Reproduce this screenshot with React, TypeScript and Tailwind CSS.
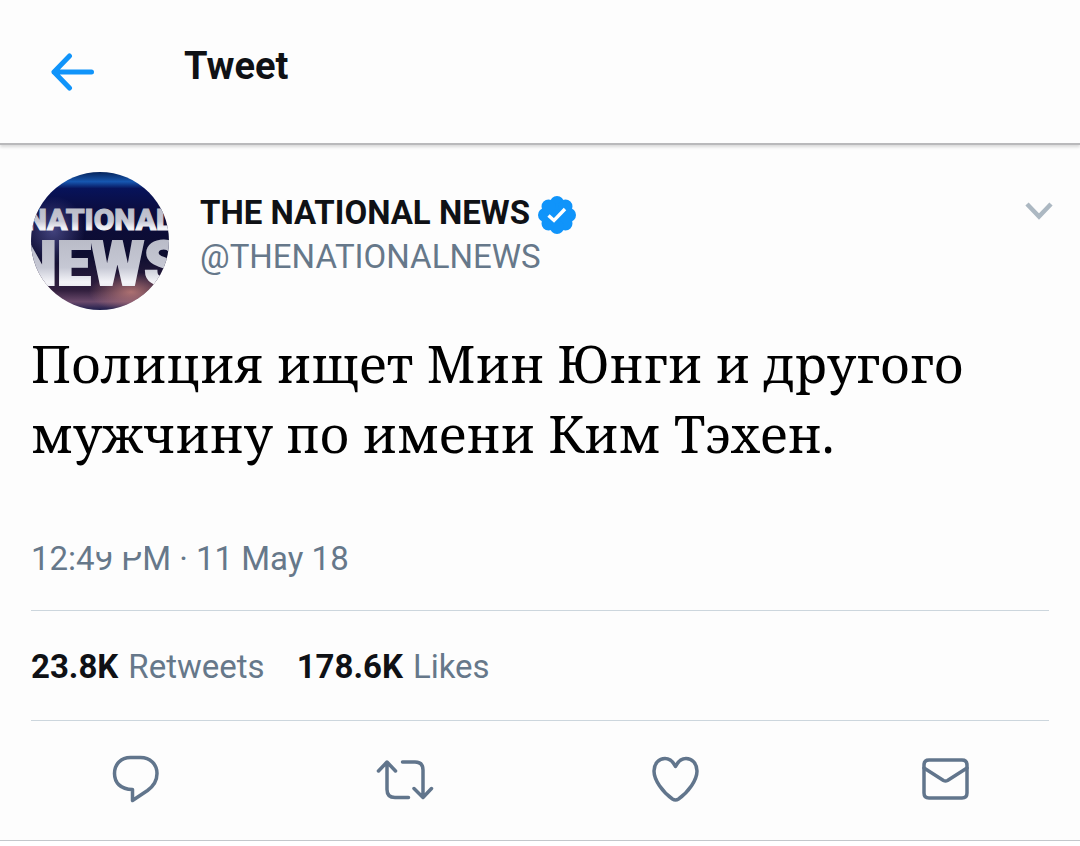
import { useState } from "react";

function Avatar() {
  return (
    <svg viewBox="0 0 138 138" className="size-[138px] shrink-0 rounded-full" role="img" aria-label="National News">
      <defs>
        <linearGradient id="sky" x1="0" y1="0" x2="0" y2="1">
          <stop offset="0" stopColor="#06245c" />
          <stop offset="0.07" stopColor="#1657b0" />
          <stop offset="0.12" stopColor="#07135a" />
          <stop offset="0.3" stopColor="#0c0c3c" />
          <stop offset="0.6" stopColor="#0d0d30" />
          <stop offset="0.86" stopColor="#33203f" />
          <stop offset="0.94" stopColor="#6b4a6c" />
          <stop offset="1" stopColor="#1d1d4c" />
        </linearGradient>
        <radialGradient id="glow">
          <stop offset="0" stopColor="#c9837c" stopOpacity="0.8" />
          <stop offset="1" stopColor="#c9837c" stopOpacity="0" />
        </radialGradient>
        <radialGradient id="haze">
          <stop offset="0" stopColor="#5a5a9c" stopOpacity="0.7" />
          <stop offset="1" stopColor="#5a5a9c" stopOpacity="0" />
        </radialGradient>
        <linearGradient id="steel" x1="0" y1="0" x2="0" y2="1">
          <stop offset="0" stopColor="#b4b6c2" />
          <stop offset="0.55" stopColor="#c6c8d4" />
          <stop offset="0.75" stopColor="#f4f4f8" />
          <stop offset="1" stopColor="#dcdce4" />
        </linearGradient>
      </defs>
      <rect width="138" height="138" fill="url(#sky)" />
      <ellipse cx="22" cy="58" rx="32" ry="34" fill="url(#haze)" />
      <ellipse cx="100" cy="120" rx="42" ry="20" fill="url(#glow)" />
      <g textAnchor="middle" fontWeight="900" fill="url(#steel)" stroke="url(#steel)">
        <text x="68" y="58" fontSize="30" strokeWidth="1">NATIONAL</text>
        <text x="67" y="113" fontSize="61" strokeWidth="2">NEWS</text>
      </g>
    </svg>
  );
}

function VerifiedBadge() {
  const petals = [0, 45, 90, 135, 180, 225, 270, 315];
  return (
    <svg viewBox="0 0 38 38" className="mt-1 size-[38px]" role="img" aria-label="Verified account">
      <g fill="#1094fa">
        <circle cx="19" cy="19" r="16" />
        {petals.map((angle) => (
          <circle key={angle} cx="19" cy="7" r="7" transform={`rotate(${angle} 19 19)`} />
        ))}
      </g>
      <path d="M10.500 19.500L16 24.500L27 13" fill="none" stroke="#fff" strokeWidth="3.400" />
    </svg>
  );
}

const actions = [
  {
    label: "Reply",
    paths: ["M40.500 45.500V34.500C28.500 34.500 22.500 27.500 22.500 18.500C22.500 9 29 2.500 38.500 2.500H48.500C58 2.500 65 9 65 18.500C65 26 61 31.500 55.500 35.500Z"],
  },
  {
    label: "Retweet",
    paths: [
      "M16.500 16L25 7L33.500 16M25 8V34.500Q25 42.500 33 42.500H46.500",
      "M40.500 7H53Q61 7 61 15V42M52 33.500L61 42.500L69.500 33.500",
    ],
  },
  {
    label: "Like",
    paths: ["M43.500 11.500C40.500 5.500 36.500 3.500 33 3.500C27 3.500 22 8.500 22 16C22 25 30.500 37 40.500 44Q43.500 46 46.500 44C56.500 37 65 25 65 16C65 8.500 60 3.500 54 3.500C50.500 3.500 46.500 5.500 43.500 11.500Z"],
  },
  {
    label: "Send via message",
    paths: [
      "M27 5H60Q65 5 65 10V38Q65 43 60 43H27Q22 43 22 38V10Q22 5 27 5Z",
      "M22 13L41.500 25.500Q43.500 26.500 45.500 25.500L65 13",
    ],
  },
];

export default function App() {
  const [active, setActive] = useState<string | null>(null);

  return (
    <div className="bg-[#fdfdfd] font-[Roboto,sans-serif] text-[33px] leading-[44px] text-[#0f1115]">
      <header className="flex h-[145px] items-center gap-[88px] border-b-2 border-[#b9b9bb] pl-[50px] shadow-[0_2px_3px_rgba(0,0,0,0.15)]">
        <button aria-label="Back">
          <svg viewBox="0 0 46 38" className="h-[38px] w-[46px]" fill="none" stroke="#1094fa" strokeWidth="5" strokeLinecap="round" strokeLinejoin="round">
            <path d="M19.500 3L4 19L19.500 35M4 19H41.500" />
          </svg>
        </button>
        <h1 className="pb-3 text-[38px] font-bold">Tweet</h1>
      </header>

      <main>
        <article className="px-[31px] pt-[27px]">
          <div className="flex">
            <Avatar />
            <div className="ml-[31px] flex-1 pt-[18px]">
              <div className="flex h-[46px] items-center gap-2">
                <h2 className="font-bold">THE NATIONAL NEWS</h2>
                <VerifiedBadge />
              </div>
              <a href="#profile" className="-mt-px block text-[#66788a]">@THENATIONALNEWS</a>
            </div>
            <button aria-label="More options" className="-mr-1 self-start pt-[30px]">
              <svg viewBox="0 0 28 18" className="h-[18px] w-7" fill="none" stroke="#acb8c2" strokeWidth="4.500">
                <path d="M2 2L14 14.500L26 2" />
              </svg>
            </button>
          </div>

          <p lang="ru" className="mt-[18px] font-['Noto_Serif','DejaVu_Serif',serif] text-[51px] leading-[70px] text-black">
            Полиция ищет Мин Юнги и другого мужчину по имени Ким Тэхен.
          </p>

          <time dateTime="2018-05-11T12:49" className="relative mt-[69px] block text-[#66788a]">
            12:49 PM · 11 May 18
            <span className="absolute top-0 left-[66px] h-[15px] w-12 bg-[#fdfdfd]" />
          </time>

          <div className="mt-[29px] flex gap-8 border-y border-[#ccd6dd] pt-[34px] pb-[31px] text-[#66788a]">
            <div className="flex gap-[10px]"><b className="text-[#0f1115]">23.8K</b> Retweets</div>
            <div className="flex gap-[10px]"><b className="text-[#0f1115]">178.6K</b> Likes</div>
          </div>
        </article>

        <div className="grid h-[120px] grid-cols-4 border-b border-[#c3c7cb]">
          {actions.map(({ label, paths }) => (
            <button
              key={label}
              aria-label={label}
              aria-pressed={active === label}
              onClick={() => setActive(active === label ? null : label)}
              className="flex items-center justify-center pb-1"
            >
              <svg viewBox="0 0 87 48" className="h-12 w-[87px]" fill="none" stroke="#61758c" strokeWidth="3.500" strokeLinecap="round" strokeLinejoin="round">
                {paths.map((d) => (
                  <path key={d} d={d} />
                ))}
              </svg>
            </button>
          ))}
        </div>
      </main>
    </div>
  );
}
